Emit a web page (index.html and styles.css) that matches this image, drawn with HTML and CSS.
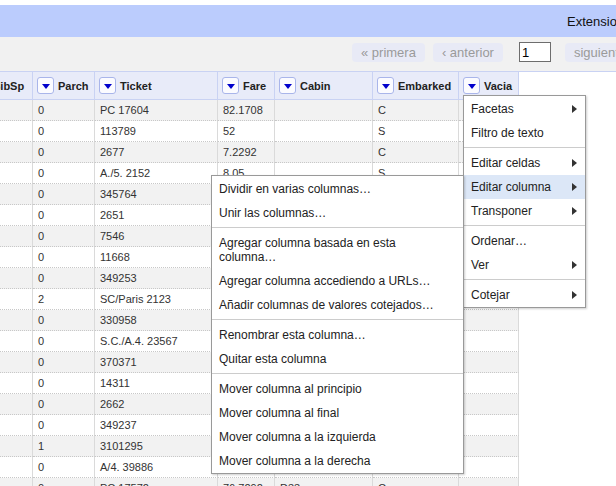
FILE: index.html
```html
<!DOCTYPE html>
<html lang="es">
<head>
<meta charset="utf-8">
<title>Datos</title>
<link rel="stylesheet" href="styles.css">
</head>
<body>
<div class="app">
  <div class="topstrip"></div>
  <header class="menubar"><span class="ext">Extensiones</span></header>
  <nav class="pager">
    <button class="pg">« primera</button>
    <button class="pg">‹ anterior</button>
    <input class="pgin" type="text" value="1">
    <button class="pg">siguiente ›</button>
    <button class="pg">última »</button>
  </nav>
  <div class="grid-wrap">
    <div class="grid">
      <div class="row head">
        <div class="hc"><span class="dd"></span><span>SibSp</span></div>
        <div class="hc"><span class="dd"></span><span>Parch</span></div>
        <div class="hc"><span class="dd"></span><span>Ticket</span></div>
        <div class="hc"><span class="dd"></span><span>Fare</span></div>
        <div class="hc"><span class="dd"></span><span>Cabin</span></div>
        <div class="hc"><span class="dd"></span><span>Embarked</span></div>
        <div class="hc"><span class="dd"></span><span>Vacia</span></div>
      </div>
      <div class="row odd"><div class="c">1</div><div class="c">0</div><div class="c">PC 17604</div><div class="c">82.1708</div><div class="c"></div><div class="c">C</div><div class="c"></div></div>
      <div class="row"><div class="c">0</div><div class="c">0</div><div class="c">113789</div><div class="c">52</div><div class="c"></div><div class="c">S</div><div class="c"></div></div>
      <div class="row odd"><div class="c">0</div><div class="c">0</div><div class="c">2677</div><div class="c">7.2292</div><div class="c"></div><div class="c">C</div><div class="c"></div></div>
      <div class="row"><div class="c">0</div><div class="c">0</div><div class="c">A./5. 2152</div><div class="c">8.05</div><div class="c"></div><div class="c">S</div><div class="c"></div></div>
      <div class="row odd"><div class="c">4</div><div class="c">0</div><div class="c">345764</div><div class="c">18</div><div class="c"></div><div class="c">S</div><div class="c"></div></div>
      <div class="row"><div class="c">1</div><div class="c">0</div><div class="c">2651</div><div class="c">11.2417</div><div class="c"></div><div class="c">C</div><div class="c"></div></div>
      <div class="row odd"><div class="c">0</div><div class="c">0</div><div class="c">7546</div><div class="c">9.475</div><div class="c"></div><div class="c">S</div><div class="c"></div></div>
      <div class="row"><div class="c">1</div><div class="c">0</div><div class="c">11668</div><div class="c">21</div><div class="c"></div><div class="c">S</div><div class="c"></div></div>
      <div class="row odd"><div class="c">0</div><div class="c">0</div><div class="c">349253</div><div class="c">7.8958</div><div class="c"></div><div class="c">C</div><div class="c"></div></div>
      <div class="row"><div class="c">1</div><div class="c">2</div><div class="c">SC/Paris 2123</div><div class="c">41.5792</div><div class="c"></div><div class="c">C</div><div class="c"></div></div>
      <div class="row odd"><div class="c">0</div><div class="c">0</div><div class="c">330958</div><div class="c">7.8792</div><div class="c"></div><div class="c">Q</div><div class="c"></div></div>
      <div class="row"><div class="c">0</div><div class="c">0</div><div class="c">S.C./A.4. 23567</div><div class="c">8.05</div><div class="c"></div><div class="c">S</div><div class="c"></div></div>
      <div class="row odd"><div class="c">0</div><div class="c">0</div><div class="c">370371</div><div class="c">15.5</div><div class="c"></div><div class="c">Q</div><div class="c"></div></div>
      <div class="row"><div class="c">1</div><div class="c">0</div><div class="c">14311</div><div class="c">7.75</div><div class="c"></div><div class="c">Q</div><div class="c"></div></div>
      <div class="row odd"><div class="c">1</div><div class="c">0</div><div class="c">2662</div><div class="c">21.6792</div><div class="c"></div><div class="c">C</div><div class="c"></div></div>
      <div class="row"><div class="c">0</div><div class="c">0</div><div class="c">349237</div><div class="c">17.8</div><div class="c"></div><div class="c">S</div><div class="c"></div></div>
      <div class="row odd"><div class="c">1</div><div class="c">1</div><div class="c">3101295</div><div class="c">39.6875</div><div class="c"></div><div class="c">S</div><div class="c"></div></div>
      <div class="row"><div class="c">0</div><div class="c">0</div><div class="c">A/4. 39886</div><div class="c">7.8</div><div class="c"></div><div class="c">S</div><div class="c"></div></div>
      <div class="row odd"><div class="c">1</div><div class="c">0</div><div class="c">PC 17572</div><div class="c">76.7292</div><div class="c">D33</div><div class="c">C</div><div class="c"></div></div>
    </div>
  </div>

  <div class="menu main">
    <div class="item"><span>Facetas</span><span class="arrow"></span></div>
    <div class="item"><span>Filtro de texto</span></div>
    <div class="sep"></div>
    <div class="item"><span>Editar celdas</span><span class="arrow"></span></div>
    <div class="item active"><span>Editar columna</span><span class="arrow"></span></div>
    <div class="item"><span>Transponer</span><span class="arrow"></span></div>
    <div class="sep"></div>
    <div class="item"><span>Ordenar…</span></div>
    <div class="item"><span>Ver</span><span class="arrow"></span></div>
    <div class="sep"></div>
    <div class="item"><span>Cotejar</span><span class="arrow"></span></div>
  </div>

  <div class="menu sub">
    <div class="item"><span>Dividir en varias columnas…</span></div>
    <div class="item"><span>Unir las columnas…</span></div>
    <div class="sep"></div>
    <div class="item"><span>Agregar columna basada en esta<br>columna…</span></div>
    <div class="item"><span>Agregar columna accediendo a URLs…</span></div>
    <div class="item"><span>Añadir columnas de valores cotejados…</span></div>
    <div class="sep"></div>
    <div class="item"><span>Renombrar esta columna…</span></div>
    <div class="item"><span>Quitar esta columna</span></div>
    <div class="sep"></div>
    <div class="item"><span>Mover columna al principio</span></div>
    <div class="item"><span>Mover columna al final</span></div>
    <div class="item"><span>Mover columna a la izquierda</span></div>
    <div class="item"><span>Mover columna a la derecha</span></div>
  </div>
</div>
</body>
</html>
```

FILE: styles.css
```css
* { box-sizing: border-box; }

body {
  margin: 0;
  background: #fff;
  font-family: "Liberation Sans", Arial, sans-serif;
  overflow: hidden;
}

.app {
  position: relative;
  width: 616px;
  height: 486px;
  overflow: hidden;
}

.topstrip { height: 5px; background: #fff; }

.menubar {
  height: 32px;
  background: #bbccfd;
  display: flex;
  align-items: center;
  padding-left: 567px;
  font-size: 13px;
  color: #111;
  white-space: nowrap;
}

.ext { flex-shrink: 0; }

.pager {
  height: 34px;
  background: #f1f1f1;
  display: flex;
  align-items: flex-start;
  gap: 8px;
  padding: 6px 0 0 352px;
  white-space: nowrap;
}

.pg {
  flex-shrink: 0;
  height: 19px;
  padding: 0 9px;
  border: none;
  border-radius: 4px;
  background: #e8eaf6;
  color: #9a9a9a;
  font-family: "Liberation Sans", Arial, sans-serif;
  font-size: 13px;
  line-height: 19px;
}

.pgin {
  flex-shrink: 0;
  width: 32px;
  height: 20px;
  margin: -1px 6px 0 8px;
  padding: 0 2px;
  border: 1px solid #6d6d6d;
  border-radius: 0;
  background: #fff;
  color: #000;
  font-family: "Liberation Sans", Arial, sans-serif;
  font-size: 13px;
}

.grid-wrap {
  border-top: 1px solid #c9d2f3;
  overflow: hidden;
  height: 415px;
}

.grid { margin-left: -32px; }

.row {
  display: grid;
  grid-template-columns: 65px 62px 123px 57px 98px 86px 60px;
}

.hc {
  height: 28px;
  display: flex;
  align-items: center;
  gap: 4px;
  padding-left: 4px;
  background: #e8ebf9;
  border-right: 1px solid #c9d2f3;
  border-bottom: 1px solid #c9d2f3;
  font-size: 11px;
  font-weight: bold;
  color: #222;
  white-space: nowrap;
  overflow: hidden;
}

.dd {
  flex-shrink: 0;
  width: 17px;
  height: 17px;
  border: 1px solid #a9b5ea;
  border-radius: 3px;
  background: #fbfbff;
  display: flex;
  align-items: center;
  justify-content: center;
}

.dd::after {
  content: "";
  width: 0;
  height: 0;
  border-left: 4.5px solid transparent;
  border-right: 4.5px solid transparent;
  border-top: 5px solid #0000cc;
  margin-top: 1px;
}

.c {
  height: 21px;
  padding-left: 5px;
  border-right: 1px solid #dadada;
  border-bottom: 1px dotted #c8c8c8;
  font-size: 11px;
  line-height: 20px;
  color: #333;
  white-space: nowrap;
  overflow: hidden;
}

.row.odd .c { background: #f2f2f2; }

.menu {
  position: absolute;
  background: #fff;
  border: 1px solid #999;
  box-shadow: 1px 1px 2px rgba(0, 0, 0, 0.2);
  padding-top: 1px;
  font-size: 12px;
  color: #222;
}

.main { left: 463px; top: 95px; width: 123px; }
.sub { left: 211px; top: 175px; width: 253px; }

.item {
  display: flex;
  justify-content: space-between;
  align-items: center;
  padding: 5px 8px 5px 7px;
  line-height: 14px;
  white-space: nowrap;
}

.item.active { background: #dce7f7; }

.arrow {
  width: 0;
  height: 0;
  border-left: 5px solid #333;
  border-top: 4.5px solid transparent;
  border-bottom: 4.5px solid transparent;
}

.sep {
  height: 1px;
  background: #ccc;
  margin: 2px 0 3px;
}
```
